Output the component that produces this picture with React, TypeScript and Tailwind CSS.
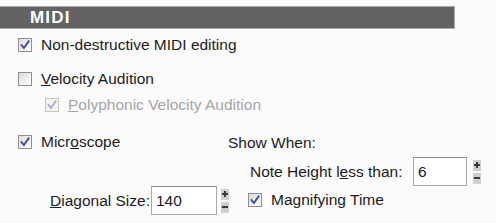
import type { ReactNode } from 'react';

function Check({ checked, disabled }: { checked?: boolean; disabled?: boolean }) {
  return (
    <span
      className={`flex items-center justify-center w-[14px] h-[14px] shrink-0 border ${
        disabled ? 'border-[#c4c4c4] bg-[#f4f4f4]' : 'border-[#8e8f8f] bg-gradient-to-br from-[#dcdcdc] to-[#ffffff]'
      }`}
    >
      {checked && (
        <svg width="10" height="10" viewBox="0 0 10 10">
          <path
            d="M1.5 5.2 L3.9 8 L8.6 1.4"
            fill="none"
            stroke={disabled ? '#a9b0cc' : '#3c4f9e'}
            strokeWidth="1.9"
            strokeLinecap="square"
          />
        </svg>
      )}
    </span>
  );
}

function CheckRow({
  checked,
  disabled,
  children,
}: {
  checked?: boolean;
  disabled?: boolean;
  children: ReactNode;
}) {
  return (
    <div className="flex items-center h-[14px] gap-[9px]">
      <Check checked={checked} disabled={disabled} />
      <span className={`leading-none whitespace-nowrap ${disabled ? 'text-[#a6a6a6]' : 'text-[#1b1b1b]'}`}>
        {children}
      </span>
    </div>
  );
}

function Spin() {
  return (
    <div className="flex flex-col gap-[2px] w-[8px]">
      <div className="h-[11px] bg-[#cfcfcf] flex items-center justify-center">
        <svg width="8" height="8" viewBox="0 0 8 8">
          <path d="M4 1 V7 M1 4 H7" stroke="#3a3a3a" strokeWidth="2" />
        </svg>
      </div>
      <div className="h-[11px] bg-[#cfcfcf] flex items-center justify-center">
        <svg width="8" height="8" viewBox="0 0 8 8">
          <path d="M1 4 H7" stroke="#3a3a3a" strokeWidth="2" />
        </svg>
      </div>
    </div>
  );
}

function NumBox({ value, width }: { value: string; width: string }) {
  return (
    <div
      className={`${width} h-[29px] shrink-0 border border-[#a9a9a9] border-t-[#8c8c8c] bg-white flex items-center pl-[4px] text-[#1b1b1b]`}
    >
      {value}
    </div>
  );
}

export default function App() {
  return (
    <div className="w-[496px] h-[223px] bg-[#fbfbfb] pt-[6px] text-[15.5px] font-['Liberation_Sans',Arial,sans-serif] overflow-hidden">
      {/* Section header */}
      <div className="w-[455px] h-[23px] bg-[#636363] border border-l-0 border-[#aaaaaa] flex items-center pl-[30px]">
        <span className="text-white font-bold text-[17px] tracking-[1.2px] leading-none">MIDI</span>
      </div>

      <div className="pl-[18px]">
        <div className="mt-[9px]">
          <CheckRow checked>Non-destructive MIDI editing</CheckRow>
        </div>
        <div className="mt-[20px]">
          <CheckRow>
            <u>V</u>elocity Audition
          </CheckRow>
        </div>
        <div className="mt-[12px] pl-[27px]">
          <CheckRow checked disabled>
            <u>P</u>olyphonic Velocity Audition
          </CheckRow>
        </div>

        {/* Microscope */}
        <div className="mt-[23px] flex">
          <div className="w-[210px] shrink-0">
            <CheckRow checked>
              Micr<u>o</u>scope
            </CheckRow>
            <div className="mt-[37px] pl-[32px] flex items-center">
              <span className="text-[#1b1b1b] whitespace-nowrap mr-[1px]">
                <u>D</u>iagonal Size:
              </span>
              <NumBox value="140" width="w-[66px]" />
              <div className="ml-[4px]">
                <Spin />
              </div>
            </div>
          </div>
          <div>
            <div className="h-[16px] flex items-center text-[#1b1b1b] leading-none whitespace-nowrap">Show When:</div>
            <div className="mt-[6px] pl-[22px] flex items-center">
              <span className="text-[#1b1b1b] whitespace-nowrap w-[163px]">
                Note Height l<u>e</u>ss than:
              </span>
              <NumBox value="6" width="w-[54px]" />
              <div className="ml-[6px]">
                <Spin />
              </div>
            </div>
            <div className="mt-[7px] pl-[20px]">
              <CheckRow checked>
                Ma<u>g</u>nifying Time
              </CheckRow>
            </div>
          </div>
        </div>
      </div>
    </div>
  );
}
